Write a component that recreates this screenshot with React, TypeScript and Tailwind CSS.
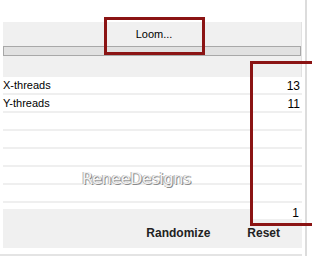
const rows: { label: string; value: string }[] = [
  { label: "X-threads", value: "13" },
  { label: "Y-threads", value: "11" },
  { label: "", value: "" },
  { label: "", value: "" },
  { label: "", value: "" },
  { label: "", value: "" },
  { label: "", value: "" },
];

export default function App() {
  return (
    <div className="relative w-[312px] h-[258px] overflow-hidden bg-white font-['Liberation_Sans',Arial,sans-serif] text-[11px] text-black">
      <div className="flex h-full">
        <div className="flex w-[302px] flex-col pl-[3px] pt-[22px]">
          {/* top panel with Loom button */}
          <div className="flex h-[55px] flex-col bg-[#f0f0f0] border-r border-[#e2e2e2]">
            <div className="flex h-[24px] items-center justify-center pl-[4px] pt-[1px]">Loom...</div>
            <div className="h-[10px] border border-[#a8a8a8] bg-[#e1e1e1]" />
            <div className="flex-1" />
          </div>

          {/* parameter rows */}
          {rows.map((r, i) => (
            <div
              key={i}
              className="flex h-[18px] items-center justify-between border-b-2 border-[#efefef] pr-[2px] pt-[1px]"
            >
              <span>{r.label}</span>
              <span className="text-[12px]">{r.value}</span>
            </div>
          ))}

          <div className="flex h-[16px]">
            <div className="mt-[6px] flex-1 bg-[#f0f0f0]" />
            <div className="flex w-[52px] items-center justify-end pr-[3px] pt-[3px] text-[12px]">1</div>
          </div>

          {/* buttons bar */}
          <div className="flex h-[29px] items-center justify-end gap-[37px] bg-[#f0f0f0] pr-[22px] pb-[1px] text-[12px] font-bold text-[#222]">
            <span>Randomize</span>
            <span>Reset</span>
          </div>
          <div className="h-[6px]" />
          <div className="h-[2px] -ml-[3px] bg-[#e4e4e4]" />
        </div>
        <div className="w-[3px]" />
        <div className="h-[256px] w-[2px] bg-[#dcdcdc]" />
      </div>

      {/* watermark */}
      <div className="absolute left-[82px] top-[167px] font-['DejaVu_Sans',sans-serif] text-[16px] tracking-[-0.4px] text-[#f2f2f2] [text-shadow:1px_1px_0_#8a8a8a,-1px_0_0_#b0b0b0]">
        ReneeDesigns
      </div>

      {/* annotation boxes */}
      <div className="absolute left-[104px] top-[17px] h-[38px] w-[101px] border-[3px] border-[#8b1414]" />
      <div className="absolute left-[250px] top-[61px] h-[165px] w-[80px] border-[3px] border-[#8b1414]" />
    </div>
  );
}
